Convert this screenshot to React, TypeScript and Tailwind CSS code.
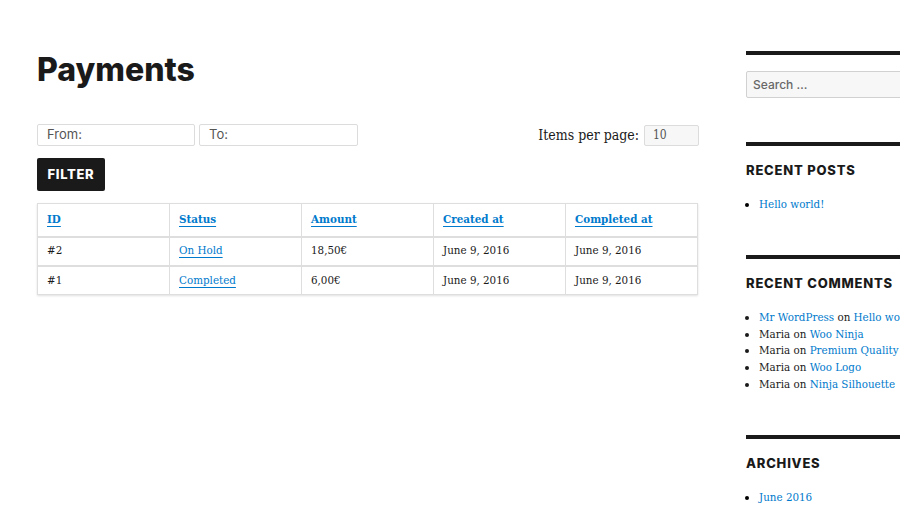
import React from "react";

const serif = { fontFamily: '"DejaVu Serif Condensed", "DejaVu Serif", "Liberation Serif", serif' };
const sans = { fontFamily: 'Inter, "Open Sans", sans-serif' };

const rows = [
  { id: "#2", status: "On Hold", amount: "18,50€", created: "June 9, 2016", completed: "June 9, 2016" },
  { id: "#1", status: "Completed", amount: "6,00€", created: "June 9, 2016", completed: "June 9, 2016" },
];

const headers = ["ID", "Status", "Amount", "Created at", "Completed at"];

const comments = [
  ["Mr WordPress", "Hello world!", true],
  ["Maria", "Woo Ninja", false],
  ["Maria", "Premium Quality", false],
  ["Maria", "Woo Logo", false],
  ["Maria", "Ninja Silhouette", false],
] as const;

function WidgetTitle({ children }: { children: React.ReactNode }) {
  return (
    <div className="border-t-4 border-[#1a1a1a] pt-[14px]">
      <h2 className="text-[13px] font-extrabold uppercase tracking-[0.06em] text-[#1a1a1a] leading-[20px]" style={sans}>
        {children}
      </h2>
    </div>
  );
}

export default function App() {
  return (
    <div className="w-[900px] h-[512px] overflow-hidden bg-white flex pl-[37px]">
      <main className="w-[662px] shrink-0 pt-[50px]">
        <h1 className="text-[32px] font-extrabold leading-[40px] text-[#1a1a1a]" style={sans}>
          Payments
        </h1>

        <div className="mt-[34px] flex items-center justify-between">
          <div className="flex gap-[4px]">
            <div className="w-[158px] h-[22px] border border-[#dcdcdc] rounded-[2px] px-[9px] flex items-center text-[13px] text-[#555]" style={sans}>
              From:
            </div>
            <div className="w-[159px] h-[22px] border border-[#dcdcdc] rounded-[2px] px-[9px] flex items-center text-[13px] text-[#555]" style={sans}>
              To:
            </div>
          </div>
          <div className="flex items-center gap-[5px]">
            <span className="text-[14px] text-[#1a1a1a]" style={serif}>Items per page:</span>
            <div className="w-[55px] h-[21px] bg-[#f7f7f7] border border-[#dcdcdc] rounded-[2px] px-[8px] flex items-center text-[12px] text-[#555]" style={serif}>
              10
            </div>
          </div>
        </div>

        <button className="mt-[12px] w-[68px] h-[33px] bg-[#1a1a1a] rounded-[2px] text-white text-[13px] font-extrabold uppercase tracking-[0.05em]" style={sans}>
          Filter
        </button>

        <table className="mt-[12px] w-[661px] border-collapse border border-[#dedede] shadow-[0_1px_2px_rgba(0,0,0,0.12)] table-fixed" style={serif}>
          <thead>
            <tr className="h-[33px]">
              {headers.map((h) => (
                <th key={h} className="border-r border-b-2 border-[#dedede] text-left px-[9px] font-bold text-[11.5px]">
                  <a className="text-[#007acc] underline underline-offset-[3px] decoration-[#007acc]">{h}</a>
                </th>
              ))}
            </tr>
          </thead>
          <tbody>
            {rows.map((r, i) => (
              <tr key={r.id} className={i === 0 ? "h-[29px] border-b-2 border-[#dedede]" : "h-[29px]"}>
                <td className="border-r border-[#dedede] px-[9px] text-[11.5px] text-[#1a1a1a]">{r.id}</td>
                <td className="border-r border-[#dedede] px-[9px] text-[11.5px]">
                  <a className="text-[#007acc] underline underline-offset-[3px]">{r.status}</a>
                </td>
                <td className="border-r border-[#dedede] px-[9px] text-[11.5px] text-[#1a1a1a]">{r.amount}</td>
                <td className="border-r border-[#dedede] px-[9px] text-[11.5px] text-[#1a1a1a]">{r.created}</td>
                <td className="px-[9px] text-[11.5px] text-[#1a1a1a]">{r.completed}</td>
              </tr>
            ))}
          </tbody>
        </table>
      </main>

      <aside className="ml-[47px] w-[260px] shrink-0 pt-[51px]">
        <div className="border-t-4 border-[#1a1a1a] pt-[16px]">
          <div className="h-[27px] bg-[#f7f7f7] border border-[#d1d1d1] rounded-[2px] px-[6px] flex items-center text-[12px] font-medium text-[#686868]" style={sans}>
            Search …
          </div>
        </div>

        <div className="mt-[44px]">
          <WidgetTitle>Recent Posts</WidgetTitle>
          <ul className="mt-[16px] list-disc pl-[13px] text-[11.5px] leading-[17px]" style={serif}>
            <li><a className="text-[#007acc]">Hello world!</a></li>
          </ul>
        </div>

        <div className="mt-[42px]">
          <WidgetTitle>Recent Comments</WidgetTitle>
          <ul className="mt-[16px] list-disc pl-[13px] text-[11.5px] leading-[16.7px] text-[#1a1a1a] whitespace-nowrap" style={serif}>
            {comments.map(([who, post, link], i) => (
              <li key={i}>
                {link ? <a className="text-[#007acc]">{who}</a> : who} on <a className="text-[#007acc]">{post}</a>
              </li>
            ))}
          </ul>
        </div>

        <div className="mt-[42px]">
          <WidgetTitle>Archives</WidgetTitle>
          <ul className="mt-[16px] list-disc pl-[13px] text-[11.5px] leading-[17px]" style={serif}>
            <li><a className="text-[#007acc]">June 2016</a></li>
          </ul>
        </div>
      </aside>
    </div>
  );
}
